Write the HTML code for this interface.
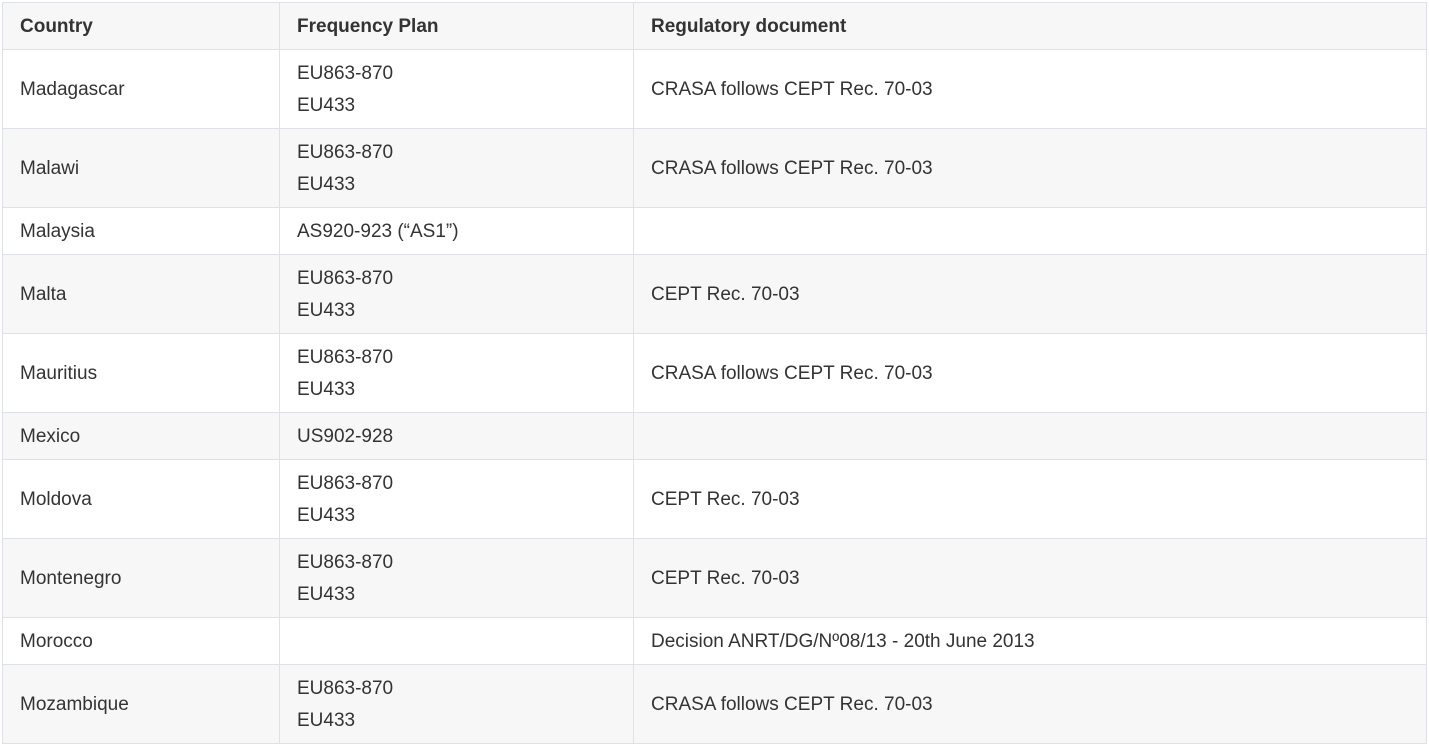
<!DOCTYPE html>
<html><head><meta charset="utf-8"><style>
body{margin:0;background:#fff;}
table{position:absolute;left:2px;top:2px;border-collapse:collapse;table-layout:fixed;width:1424px;font-family:"Liberation Sans",sans-serif;font-size:19px;color:#333;}
td,th{border:1px solid #dee2e6;padding:2px 0 0 17px;text-align:left;vertical-align:middle;line-height:32px;}
th{font-weight:bold;height:44px;}
tr.h,tr.s{background:#f7f7f7;}
tr.t td{height:76px;}
tr.o td{height:44px;}
</style></head><body>
<table>
<colgroup><col style="width:277px"><col style="width:354px"><col style="width:793px"></colgroup>
<tr class="h"><th>Country</th><th>Frequency Plan</th><th>Regulatory document</th></tr>
<tr class="t"><td>Madagascar</td><td>EU863-870<br>EU433</td><td>CRASA follows CEPT Rec. 70-03</td></tr>
<tr class="t s"><td>Malawi</td><td>EU863-870<br>EU433</td><td>CRASA follows CEPT Rec. 70-03</td></tr>
<tr class="o"><td>Malaysia</td><td>AS920-923 (“AS1”)</td><td></td></tr>
<tr class="t s"><td>Malta</td><td>EU863-870<br>EU433</td><td>CEPT Rec. 70-03</td></tr>
<tr class="t"><td>Mauritius</td><td>EU863-870<br>EU433</td><td>CRASA follows CEPT Rec. 70-03</td></tr>
<tr class="o s"><td>Mexico</td><td>US902-928</td><td></td></tr>
<tr class="t"><td>Moldova</td><td>EU863-870<br>EU433</td><td>CEPT Rec. 70-03</td></tr>
<tr class="t s"><td>Montenegro</td><td>EU863-870<br>EU433</td><td>CEPT Rec. 70-03</td></tr>
<tr class="o"><td>Morocco</td><td></td><td>Decision ANRT/DG/Nº08/13 - 20th June 2013</td></tr>
<tr class="t s"><td>Mozambique</td><td>EU863-870<br>EU433</td><td>CRASA follows CEPT Rec. 70-03</td></tr>
</table>
</body></html>
